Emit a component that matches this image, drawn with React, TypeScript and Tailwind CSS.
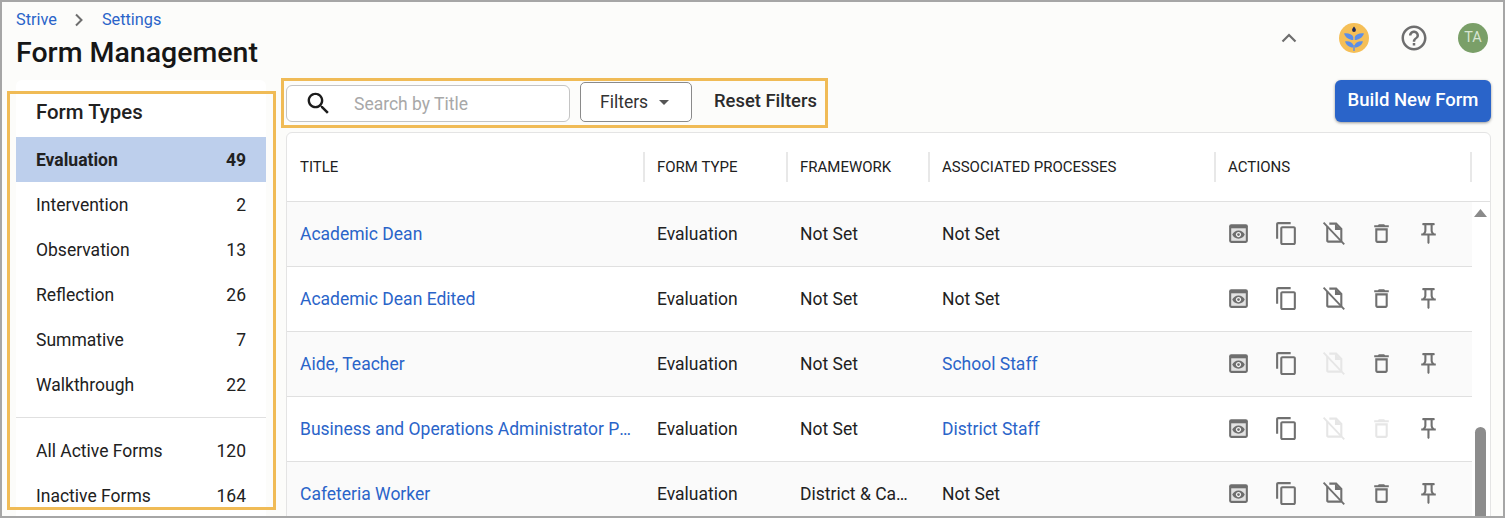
import React from "react";

const sidebar = [
  ["Intervention", "2"],
  ["Observation", "13"],
  ["Reflection", "26"],
  ["Summative", "7"],
  ["Walkthrough", "22"],
];

const rows = [
  { title: "Academic Dean", fw: "Not Set", proc: "Not Set", note: true, del: true },
  { title: "Academic Dean Edited", fw: "Not Set", proc: "Not Set", note: true, del: true },
  { title: "Aide, Teacher", fw: "Not Set", proc: "School Staff", link: true, note: false, del: true },
  { title: "Business and Operations Administrator Pre-Evaluation", fw: "Not Set", proc: "District Staff", link: true, note: false, del: false },
  { title: "Cafeteria Worker", fw: "District & Campus Staff", proc: "Not Set", note: true, del: true },
];

const Icon = ({ d, on = true }: { d: string; on?: boolean }) => (
  <svg viewBox="0 0 24 24" className={on ? "w-[25px] h-[25px] fill-[#707070]" : "w-[25px] h-[25px] fill-[#e6e6e6]"}>
    <path d={d} />
  </svg>
);

const Preview = () => (
  <svg viewBox="0 0 24 24" className="w-[25px] h-[25px]">
    <rect x="3" y="3" width="18" height="18" rx="2" fill="#6e6e6e" />
    <rect x="5" y="7" width="14" height="12" fill="#e2e2e2" />
    <path d="M12 9c-2.730 0-5.060 1.660-6 4 .94 2.340 3.270 4 6 4s5.060-1.660 6-4c-.94-2.340-3.270-4-6-4z" fill="#6e6e6e" />
    <path d="M12 10.500c-1.380 0-2.500 1.120-2.500 2.500s1.120 2.500 2.500 2.500 2.500-1.120 2.500-2.500-1.120-2.500-2.500-2.500z" fill="#f4f4f4" />
    <circle cx="12" cy="13" r="1.300" fill="#6e6e6e" />
  </svg>
);

const NoteOff = ({ on }: { on: boolean }) => (
  <svg viewBox="0 0 24 24" className={on ? "w-[25px] h-[25px] text-[#707070]" : "w-[25px] h-[25px] text-[#e6e6e6]"} fill="none" stroke="currentColor">
    <path d="M8 2.500h6.500l5 5V19a.8.8 0 0 1-.8.8H6.800A.8.8 0 0 1 6 19V5" strokeWidth="2" />
    <path d="M14 3v5h5" strokeWidth="1.200" fill="currentColor" />
    <path d="M2.500 1.500 22.300 22.500" strokeWidth="1.800" />
  </svg>
);

const copy =
  "M16 1H4c-1.100 0-2 .9-2 2v14h2V3h12V1zm3 4H8c-1.100 0-2 .9-2 2v14c0 1.100.9 2 2 2h11c1.100 0 2-.9 2-2V7c0-1.100-.9-2-2-2zm0 16H8V7h11v14z";
const trash =
  "M16 9v10H8V9h8m-1.500-6h-5l-1 1H5v2h14V4h-3.500l-1-1zM18 7H6v12c0 1.100.9 2 2 2h8c1.100 0 2-.9 2-2V7z";
const pin =
  "M14 4v5c0 1.120.37 2.160 1 3H9c.65-.86 1-1.900 1-3V4h4m3-2H7c-.55 0-1 .45-1 1s.45 1 1 1h1v5c0 1.660-1.340 3-3 3v2h5.970v7l1 1 1-1v-7H19v-2c-1.660 0-3-1.340-3-3V4h1c.55 0 1-.45 1-1s-.45-1-1-1z";

const Logo = () => (
  <svg viewBox="0 0 30 30" className="w-[30px] h-[30px]">
    <circle cx="15" cy="15" r="15" fill="#f5bf57" />
    <path d="M15 3.500c1.200 1.600 1.900 2.500 1.900 3.500a1.900 1.900 0 0 1-3.800 0c0-1 .7-1.900 1.900-3.500z" fill="#1f2a5a" />
    <path d="M14.300 17C10 17 6.600 14.800 5 10.500c4-.6 8 .6 9.300 3.500zM15.700 17c4.300 0 7.700-2.200 9.300-6.500-4-.6-8 .6-9.300 3.500z" fill="#5b8ee8" />
    <path d="M14.300 24.500C10 24.500 7.300 22 6 18.500c4-.6 7 .6 8.300 3.500zM15.700 24.500c4.300 0 7-2.500 8.300-6-4-.6-7 .6-8.300 3.500z" fill="#5b8ee8" />
    <rect x="14.300" y="22" width="1.400" height="6" fill="#5b8ee8" />
  </svg>
);

const SideRow = ({ label, n, active }: { label: string; n: string; active?: boolean }) => (
  <div className={`h-[45px] pt-[2px] flex items-center justify-between pl-[20px] pr-[20px] text-[17.500px] text-[#212121] ${active ? "bg-[#bdcfec] font-bold" : ""}`}>
    <span>{label}</span>
    <span>{n}</span>
  </div>
);

const Sep = () => <span className="w-[2px] h-[30px] bg-[#e8e8e8] shrink-0" />;

export default function App() {
  return (
    <div className="relative w-[1505px] h-[518px] overflow-hidden border-2 border-[#a6a6a6] bg-[#fcfcfa] font-['Roboto',sans-serif] text-[#212121]">
      <div className="flex items-start justify-between pl-[14px] pr-[15px] h-[78px]">
        <div className="pt-[8px]">
          <div className="flex items-center text-[16.300px] leading-[20px] text-[#2a64c9]">
            <span>Strive</span>
            <svg viewBox="0 0 10 14" className="w-[10px] h-[14px] mx-[17.500px]" fill="none" stroke="#6e6e6e" strokeWidth="2">
              <path d="M2 1.500 7.500 7 2 12.500" />
            </svg>
            <span>Settings</span>
          </div>
          <div className="mt-[5px] text-[28.500px] leading-[36px] font-medium text-[#161616]">Form Management</div>
        </div>
        <div className="flex items-center pt-[21px]">
          <svg viewBox="0 0 16 10" className="w-[16px] h-[10px] mr-[42px]" fill="none" stroke="#6e6e6e" strokeWidth="2.200">
            <path d="M1.500 8.500 8 2l6.500 6.500" />
          </svg>
          <Logo />
          <svg viewBox="0 0 24 24" className="w-[30px] h-[30px] ml-[30px] fill-[#6e6e6e]">
            <path d="M11 18h2v-2h-2v2zm1-16C6.480 2 2 6.480 2 12s4.480 10 10 10 10-4.480 10-10S17.520 2 12 2zm0 18c-4.410 0-8-3.590-8-8s3.590-8 8-8 8 3.590 8 8-3.590 8-8 8zm0-14c-2.210 0-4 1.790-4 4h2c0-1.100.9-2 2-2s2 .9 2 2c0 2-3 1.750-3 5h2c0-2.250 3-2.500 3-5 0-2.210-1.790-4-4-4z" />
          </svg>
          <div className="ml-[29px] w-[30px] h-[30px] rounded-full bg-[#7a9f68] text-[#d8e4d2] text-[14.500px] flex items-center justify-center">TA</div>
        </div>
      </div>

      <div className="flex items-start pl-[14px]">
        <aside className="w-[250px] h-[440px] bg-white rounded-t-[6px] shrink-0">
          <div className="h-[57px] pt-[20px] pl-[20px] text-[20.400px] leading-[24px] font-medium text-[#212121]">Form Types</div>
          <SideRow label="Evaluation" n="49" active />
          {sidebar.map(([l, n]) => (
            <SideRow key={l} label={l} n={n} />
          ))}
          <div className="h-px bg-[#e0e0e0] mt-[10px] mb-[10px]" />
          <SideRow label="All Active Forms" n="120" />
          <SideRow label="Inactive Forms" n="164" />
        </aside>

        <main className="ml-[20px] w-[1205px]">
          <div className="flex items-start justify-between h-[52px]">
            <div className="flex items-start">
              <div className="mt-[5px] w-[284px] h-[37px] border border-[#c4c4c4] rounded-[6px] bg-white flex items-center pl-[17px]">
                <svg viewBox="0 0 24 24" className="w-[29px] h-[29px] fill-[#1c1c1c]">
                  <path d="M15.500 14h-.79l-.28-.27C15.410 12.590 16 11.110 16 9.500 16 5.910 13.090 3 9.500 3S3 5.910 3 9.500 5.910 16 9.500 16c1.610 0 3.090-.59 4.230-1.570l.27.28v.79l5 4.990L20.490 19l-4.990-5zm-6 0C7.010 14 5 11.990 5 9.500S7.010 5 9.500 5 14 7.010 14 9.500 11.990 14 9.500 14z" />
                </svg>
                <span className="ml-[21px] pt-[2px] text-[17.500px] text-[#a8a8a8]">Search by Title</span>
              </div>
              <div className="ml-[10px] mt-[2px] w-[112px] h-[40px] pt-[1px] border border-[#8a8a8a] rounded-[5px] bg-white flex items-center pl-[19px] text-[17.500px] text-[#333]">
                Filters
                <svg viewBox="0 0 10 5" className="w-[10px] h-[5px] ml-[11px] fill-[#555]">
                  <path d="M0 0h10L5 5z" />
                </svg>
              </div>
              <div className="ml-[22px] mt-[10px] text-[18.400px] leading-[22px] font-medium text-[#2b2b2b]">Reset Filters</div>
            </div>
            <div className="w-[156px] h-[42px] bg-[#2a64c9] rounded-[6px] text-white text-[18.500px] font-medium flex items-center justify-center shadow-[0_1px_3px_rgba(0,0,0,0.4)]">
              Build New Form
            </div>
          </div>

          <div className="w-[1205px] border border-[#e4e4e4] rounded-t-[6px] bg-white">
            <div className="flex items-center h-[69px] border-b border-[#e0e0e0] text-[15px] text-[#212121]">
              <div className="w-[356px] pl-[13px]">TITLE</div>
              <Sep />
              <div className="w-[141px] pl-[12px]">FORM TYPE</div>
              <Sep />
              <div className="w-[140px] pl-[12px]">FRAMEWORK</div>
              <Sep />
              <div className="w-[284px] pl-[12px]">ASSOCIATED PROCESSES</div>
              <Sep />
              <div className="w-[254px] pl-[12px]">ACTIONS</div>
              <Sep />
            </div>
            <div className="flex">
              <div className="w-[1185px] shrink-0">
                {rows.map((r, i) => (
                  <div
                    key={r.title}
                    className={`flex items-center h-[65px] border-b border-[#e0e0e0] text-[17.500px] text-[#212121] ${i % 2 === 0 ? "bg-[#fafafa]" : "bg-white"}`}
                  >
                    <div className="w-[357px] pl-[13px] pr-[12px] truncate text-[#2a64c9]">{r.title}</div>
                    <div className="w-[143px] pl-[13px]">Evaluation</div>
                    <div className="w-[142px] pl-[13px] pr-[20px] truncate">{r.fw}</div>
                    <div className={`w-[286px] pl-[13px] ${r.link ? "text-[#2a64c9]" : ""}`}>{r.proc}</div>
                    <div className="flex items-center pb-[2px]">
                      <div className="w-[47.500px] flex justify-center"><Preview /></div>
                      <div className="w-[47.500px] flex justify-center"><Icon d={copy} /></div>
                      <div className="w-[47.500px] flex justify-center"><NoteOff on={r.note} /></div>
                      <div className="w-[47.500px] flex justify-center"><Icon d={trash} on={r.del} /></div>
                      <div className="w-[47.500px] flex justify-center"><Icon d={pin} /></div>
                    </div>
                  </div>
                ))}
              </div>
              <div className="w-[18px] pl-[2px] pt-[7px] flex flex-col items-start">
                <svg viewBox="0 0 13 8" className="w-[13px] h-[8px] fill-[#8a8a8a]">
                  <path d="M6.500 0l6.500 8H0z" />
                </svg>
                <div className="mt-[210px] ml-[1px] w-[11px] h-[120px] rounded-t-[6px] bg-[#8c8c8c]" />
              </div>
            </div>
          </div>
        </main>
      </div>

      <div className="absolute left-[5px] top-[89px] w-[269px] h-[419px] border-[3px] border-[#f0bb56] pointer-events-none" />
      <div className="absolute left-[279px] top-[76px] w-[547px] h-[50px] border-[3px] border-[#f0bb56] pointer-events-none" />
    </div>
  );
}
